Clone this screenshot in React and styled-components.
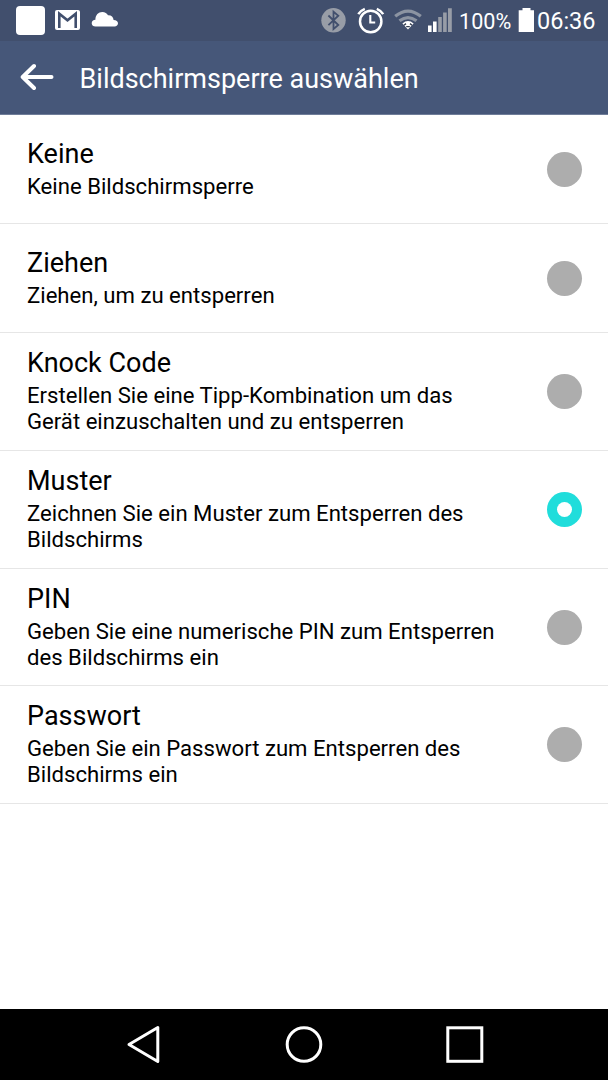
import React, { useState } from 'react'
import styled, { createGlobalStyle } from 'styled-components'

const GlobalStyle = createGlobalStyle`
  * { box-sizing: border-box; }
  body {
    margin: 0;
    background: #fff;
    font-family: Roboto, 'Liberation Sans', sans-serif;
  }
  svg { display: block; flex: none; }
`

const Screen = styled.div`
  width: 608px;
  height: 1080px;
  display: flex;
  flex-direction: column;
  background: #fff;
  overflow: hidden;
`

const StatusBar = styled.div`
  height: 41px;
  flex: none;
  display: flex;
  justify-content: space-between;
  background: #414f6d;
  color: #fff;
`

const Battery = styled.span`
  width: 52px;
  margin: 1px 7px 0 6px;
  font-size: 21.6px;
  line-height: 41px;
  white-space: nowrap;
`

const Clock = styled.span`
  width: 74px;
  margin-top: 1px;
  padding-left: 3px;
  font-size: 23.5px;
  line-height: 41px;
  white-space: nowrap;
`

const StatusRight = styled.div`
  display: flex;
`

const Header = styled.header`
  height: 74px;
  flex: none;
  display: flex;
  align-items: center;
  padding-left: 20px;
  background: #465779;
  border-bottom: 1px solid #6f7d99;
  color: #fff;
`

const BackIcon = styled.svg`
  margin-top: -1px;
`

const Title = styled.h1`
  margin: 3px 0 0 24.5px;
  font-size: 27px;
  font-weight: 400;
  line-height: 32px;
  white-space: nowrap;
`

const List = styled.div`
  flex: 1;
`

const Row = styled.div`
  height: ${p => p.$height}px;
  display: flex;
  align-items: center;
  justify-content: space-between;
  padding: 0 26.5px 0 27px;
  border-bottom: 1px solid #e6e6e6;
  color: #000;
  cursor: pointer;
`

const Label = styled.div`
  padding-bottom: 1.8px;
`

const Name = styled.div`
  font-size: 27px;
  line-height: 32px;
`

const Summary = styled.div`
  margin-top: 3px;
  font-size: 22.13px;
  line-height: 26px;
  white-space: pre-line;
`

const Radio = styled.span`
  width: 35px;
  height: 35px;
  flex: none;
  border-radius: 50%;
  display: flex;
  align-items: center;
  justify-content: center;
  background: ${p => (p.$checked ? '#20dddb' : '#adadad')};
  &::after {
    content: '';
    width: 15px;
    height: 15px;
    border-radius: 50%;
    background: ${p => (p.$checked ? '#fff' : 'transparent')};
  }
`

const NavBar = styled.nav`
  height: 71px;
  flex: none;
  background: #000;
`

const options = [
  { id: 'none', name: 'Keine', text: 'Keine Bildschirmsperre', height: 109 },
  { id: 'swipe', name: 'Ziehen', text: 'Ziehen, um zu entsperren', height: 109 },
  { id: 'knock', name: 'Knock Code', text: 'Erstellen Sie eine Tipp-Kombination um das\nGerät einzuschalten und zu entsperren', height: 118 },
  { id: 'pattern', name: 'Muster', text: 'Zeichnen Sie ein Muster zum Entsperren des\nBildschirms', height: 118 },
  { id: 'pin', name: 'PIN', text: 'Geben Sie eine numerische PIN zum Entsperren\ndes Bildschirms ein', height: 117 },
  { id: 'password', name: 'Passwort', text: 'Geben Sie ein Passwort zum Entsperren des\nBildschirms ein', height: 118 },
]

const Notifications = () => (
  <svg width="130" height="41" viewBox="0 0 130 41">
    <rect x="16" y="6" width="29" height="29" rx="4" fill="#fff" />
    <rect x="55" y="10" width="25" height="20" rx="2" fill="#fff" />
    <path d="M59.3 28V13.8L67.5 20.3L75.7 13.8V28" fill="none" stroke="#414f6d" strokeWidth="2.6" />
    <path d="M95.6 26.5C93.3 26.5 91.7 25.2 91.7 23.2C91.7 21.2 93.3 19.8 95.4 19.7C95.4 15 98.4 12 102.3 12C105 12 107 13.3 108 15.2C111.3 15 113.3 17 113.6 20C116.3 20 118 21.5 118 23.3C118 25.2 116.5 26.5 114.6 26.5Z" fill="#fff" />
  </svg>
)

const SystemIcons = () => (
  <svg width="133" height="41" viewBox="320 0 133 41">
    <circle cx="333.5" cy="20.3" r="12.2" fill="#989da7" />
    <path d="M328.4 15.5L338.3 25L333.5 29V11.7L338.3 15.7L328.4 25.2" fill="none" stroke="#414f6d" strokeWidth="1.8" />
    <circle cx="370.7" cy="21.5" r="10.7" fill="none" stroke="#fff" strokeWidth="2.5" />
    <path d="M370.3 15V22.5H375.2" fill="none" stroke="#fff" strokeWidth="2.1" />
    <path d="M358.3 14.2Q360.5 10.5 364.8 8.8M376.8 8.8Q381 10.5 383.2 14.2" fill="none" stroke="#fff" strokeWidth="2.5" />
    <path d="M395.2 16.3Q408 5.8 420.8 16.3" fill="none" stroke="#8c94a2" strokeWidth="3.2" />
    <path d="M399.5 20.8Q408 14.4 416.5 20.8" fill="none" stroke="#8c94a2" strokeWidth="3.2" />
    <path d="M402.4 23.4Q408 18.7 413.6 23.4L408 29.5Z" fill="#fff" />
    <path d="M404 25.2L406 23.6M410 23.6L412 25.2M406.2 26.6H409.8" fill="none" stroke="#353f51" strokeWidth="1.4" />
    <path d="M428 25.5h3.6V32h-3.6zM433 21.5h3.6V32h-3.6z" fill="#fff" />
    <path d="M438.2 17h3.6V32h-3.6zM443.1 12.5h3.6V32h-3.6zM448 8.2h3.8V32h-3.8z" fill="#989da7" />
  </svg>
)

const BatteryIcon = () => (
  <svg width="16" height="41" viewBox="0 0 16 41">
    <path d="M4.5 8h8v2.2H16V32H.7V10.2h3.8z" fill="#fff" />
  </svg>
)

const App = () => {
  const [selected, setSelected] = useState('pattern')

  return (
    <>
      <GlobalStyle />
      <Screen>
        <StatusBar>
          <Notifications />
          <StatusRight>
            <SystemIcons />
            <Battery>100%</Battery>
            <BatteryIcon />
            <Clock>06:36</Clock>
          </StatusRight>
        </StatusBar>
        <Header>
          <BackIcon width="35" height="30" viewBox="20.5 62.5 35 30">
            <path d="M52 77.5H24M34.5 66.5L23.2 77.5L34.5 88.5" fill="none" stroke="#fff" strokeWidth="4" strokeLinecap="round" strokeLinejoin="round" />
          </BackIcon>
          <Title>Bildschirmsperre auswählen</Title>
        </Header>
        <List>
          {options.map(o => (
            <Row key={o.id} $height={o.height} onClick={() => setSelected(o.id)}>
              <Label>
                <Name>{o.name}</Name>
                <Summary>{o.text}</Summary>
              </Label>
              <Radio $checked={selected === o.id} />
            </Row>
          ))}
        </List>
        <NavBar>
          <svg width="608" height="71" viewBox="0 1009 608 71" fill="none" stroke="#fff" strokeWidth="3">
            <path d="M129 1044.5L157.8 1027.5V1061.5Z" strokeLinejoin="round" />
            <circle cx="304" cy="1044.5" r="16.8" />
            <rect x="447.8" y="1027.8" width="34" height="33.5" />
          </svg>
        </NavBar>
      </Screen>
    </>
  )
}

export default App
